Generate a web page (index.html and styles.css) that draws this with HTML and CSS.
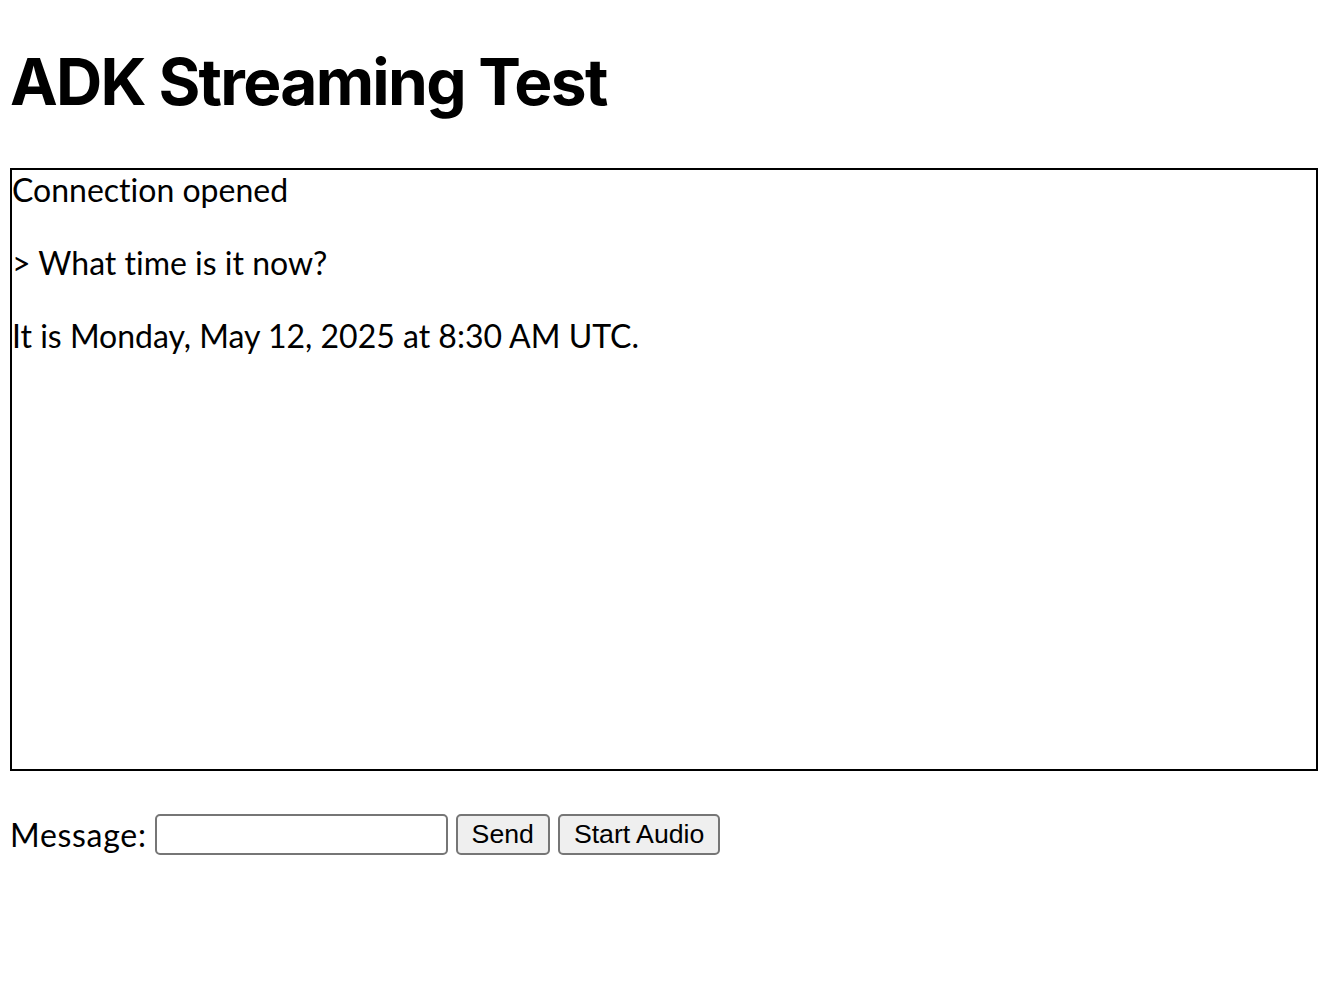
FILE: index.html
```html
<!DOCTYPE html>
<html>
<head>
<meta charset="utf-8">
<title>ADK Streaming Test</title>
<link rel="stylesheet" href="styles.css">
</head>
<body>
<h1 class="title">ADK Streaming Test</h1>
<div class="messages">
  <p class="msg">Connection opened</p>
  <p class="msg">&gt; What time is it now?</p>
  <p class="msg">It is Monday, May 12, 2025 at 8:30 AM UTC.</p>
</div>
<form class="composer">
  <label class="label" for="message">Message:</label>
  <input class="field" type="text" id="message">
  <button class="btn" type="button">Send</button>
  <button class="btn" type="button">Start Audio</button>
</form>
</body>
</html>
```

FILE: styles.css
```css
html, body {
  margin: 0;
  padding: 0;
  background: #ffffff;
}
body {
  padding: 0 14px 0 10px;
  font-family: "Lato", "Noto Sans", sans-serif;
  font-variant-ligatures: none;
  color: #000;
}
.title {
  margin: 0;
  padding-top: 44px;
  height: 168px;
  box-sizing: border-box;
  font-family: "Inter", "Lato", sans-serif;
  font-size: 64px;
  line-height: 76px;
  font-weight: 700;
  letter-spacing: -1.7px;
}
.messages {
  height: 603px;
  box-sizing: border-box;
  border: 2px solid #000;
  display: flex;
  flex-direction: column;
  gap: 37px;
  padding-top: 2px;
}
.msg {
  margin: 0;
  font-size: 32px;
  line-height: 36px;
}
.composer {
  margin: 43px 0 0 0;
  display: flex;
  align-items: center;
  gap: 8px;
}
.label {
  font-size: 32px;
  line-height: 41px;
  letter-spacing: 0.7px;
}
.field {
  width: 293px;
  height: 41px;
  box-sizing: border-box;
  border: 2px solid #767676;
  border-radius: 5px;
  background: #fff;
  margin: 0;
  padding: 2px 4px;
  font-size: 26px;
}
.btn {
  height: 41px;
  box-sizing: border-box;
  border: 2px solid #767676;
  border-radius: 5px;
  background: #efefef;
  margin: 0;
  padding: 0 14px;
  font-family: "Liberation Sans", Arial, sans-serif;
  font-size: 26.67px;
  color: #000;
}
```
